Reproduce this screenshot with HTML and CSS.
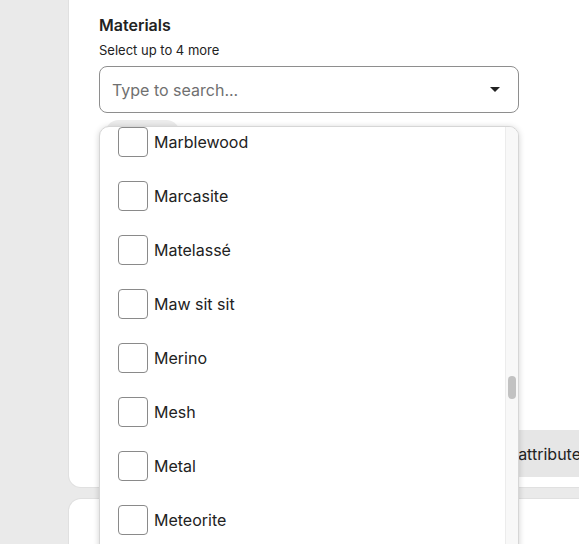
FILE: index.html
```html
<!DOCTYPE html>
<html lang="en">
<head>
    <meta charset="UTF-8">
    <title>Materials</title>
    <link rel="stylesheet" href="styles.css">
</head>
<body>
    <div class="page">
        <div class="card card-main">
            <h3 class="field-label">Materials</h3>
            <p class="field-hint">Select up to 4 more</p>
            <div class="search-box">
                <span class="placeholder">Type to search...</span>
                <span class="caret"></span>
            </div>
            <div class="chip-row">
                <span class="chip">Leather</span>
            </div>
            <div class="attr-row">
                <button class="attr-button">Add attribute</button>
            </div>

            <!-- open dropdown list -->
            <div class="dropdown">
                <ul class="option-list">
                    <li class="option"><span class="checkbox"></span>Marblewood</li>
                    <li class="option"><span class="checkbox"></span>Marcasite</li>
                    <li class="option"><span class="checkbox"></span>Matelassé</li>
                    <li class="option"><span class="checkbox"></span>Maw sit sit</li>
                    <li class="option"><span class="checkbox"></span>Merino</li>
                    <li class="option"><span class="checkbox"></span>Mesh</li>
                    <li class="option"><span class="checkbox"></span>Metal</li>
                    <li class="option"><span class="checkbox"></span>Meteorite</li>
                </ul>
                <div class="scroll-track"><div class="scroll-thumb"></div></div>
            </div>
        </div>
        <div class="card card-next"></div>
    </div>
</body>
</html>
```

FILE: styles.css
```css
body {
    margin: 0;
    background: #eaeaea;
    font-family: Inter, "Open Sans", Arial, sans-serif;
    color: #222;
    overflow: hidden;
}
.page {
    padding-left: 69px;
    width: 620px;
}
.card {
    background: white;
    border-radius: 12px;
    box-shadow: 0 0 0 1px #e0e0e0;
}
.card-main {
    position: relative;
    margin-top: -20px;
    height: 507px;
    padding: 33px 0 0 30px;
    box-sizing: border-box;
}
.card-next {
    margin-top: 12px;
    height: 60px;
}
.field-label {
    margin: 0;
    font-size: 16px;
    font-weight: 600;
    line-height: 24px;
}
.field-hint {
    margin: 5px 0 0;
    font-size: 13px;
    line-height: 16px;
}
.search-box {
    margin-top: 8px;
    width: 420px;
    height: 47px;
    box-sizing: border-box;
    border: 1px solid #8e8e8e;
    border-radius: 8px;
    display: flex;
    align-items: center;
    padding: 0 18px 0 12px;
}
.placeholder {
    flex: 1;
    font-size: 16px;
    color: #707070;
}
.caret {
    width: 0;
    height: 0;
    border-left: 5px solid transparent;
    border-right: 5px solid transparent;
    border-top: 5px solid #222;
}
.chip-row {
    margin-top: 7px;
    padding-left: 6px;
}
.chip {
    display: inline-block;
    background: #ececec;
    border-radius: 16px;
    padding: 6px 14px;
    font-size: 13px;
}
.attr-row {
    margin-top: 282px;
    padding-left: 364px;
}
.attr-button {
    font-family: inherit;
    font-size: 16px;
    color: #222;
    background: #e6e6e6;
    border: none;
    border-radius: 0;
    height: 47px;
    padding: 0 20px;
}
.dropdown {
    position: absolute;
    left: 30px;
    top: 146px;
    width: 420px;
    height: 440px;
    background: white;
    border: 1px solid #d6d6d6;
    border-radius: 10px 10px 0 0;
    box-shadow: 0 1px 6px rgba(0, 0, 0, 0.18);
    overflow: hidden;
    box-sizing: border-box;
}
.option-list {
    list-style: none;
    margin: 0;
    padding: 0 0 0 18px;
}
.option {
    display: flex;
    align-items: center;
    height: 54px;
    font-size: 16px;
}
.option:first-child {
    margin-top: -12px;
}
.checkbox {
    width: 30px;
    height: 30px;
    box-sizing: border-box;
    border: 1px solid #8a8a8a;
    border-radius: 4px;
    margin-right: 6px;
}
.scroll-track {
    position: absolute;
    top: 0;
    right: 0;
    width: 12px;
    height: 100%;
    background: #f8f8f8;
    border-left: 1px solid #ececec;
}
.scroll-thumb {
    position: absolute;
    left: 2px;
    top: 249px;
    width: 8px;
    height: 23px;
    border-radius: 4px;
    background: #c2c2c2;
}
```
